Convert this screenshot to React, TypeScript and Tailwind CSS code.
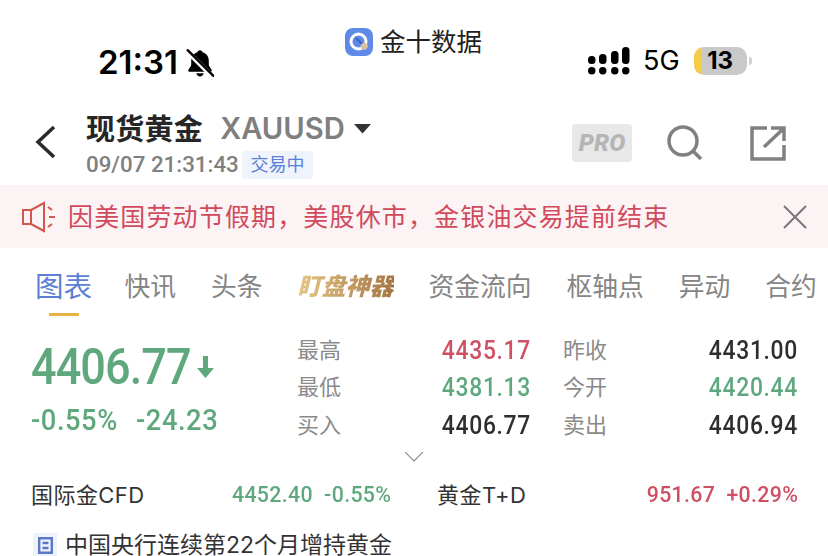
const cjk = "font-['Inter','Noto_Sans_CJK_SC',sans-serif]";

function Num({ children, className = "" }: { children: React.ReactNode; className?: string }) {
  return <span className={`font-['Roboto',sans-serif] font-medium inline-block whitespace-nowrap ${className}`}>{children}</span>;
}

function BellOff() {
  return (
    <svg width="28" height="30" viewBox="2 1 26 28" className="ml-[8px] mt-[1px]">
      <path d="M15 3c1.400 0 2.200.9 2.400 2 3.600 1 5.800 4 5.800 8v3.500c0 2 2.800 4.200 2.800 5.500 0 .8-.5 1.200-1.400 1.200H5.400C4.500 23.200 4 22.800 4 22c0-1.300 2.800-3.500 2.800-5.500V13c0-4 2.200-7 5.800-8 .2-1.100 1-2 2.400-2z" fill="#000" />
      <path d="M11.500 24.500h7c-.4 1.900-1.800 3-3.500 3s-3.100-1.100-3.500-3z" fill="#000" />
      <path d="M3 4l24 24" stroke="#fff" strokeWidth="4.500" />
      <path d="M3.500 3l24 24" stroke="#000" strokeWidth="2.200" strokeLinecap="round" />
    </svg>
  );
}

function Signal() {
  const cols = [
    { x: 0, top: 9 },
    { x: 11, top: 7 },
    { x: 23, top: 4 },
    { x: 34, top: 0 },
  ];
  return (
    <svg width="42" height="28" viewBox="0 0 42 28">
      {cols.map((c) => (
        <g key={c.x}>
          <rect x={c.x} y={c.top} width="7.500" height={17 - c.top} rx="3.500" fill="#000" />
          <rect x={c.x} y="20" width="7.500" height="7.500" rx="3.700" fill="#000" />
        </g>
      ))}
    </svg>
  );
}

function Logo() {
  return (
    <svg width="28" height="28" viewBox="0 0 28 28">
      <rect width="28" height="28" rx="8" fill="#5f8ae8" />
      <circle cx="13.500" cy="13.500" r="7.500" fill="none" stroke="#fff" strokeWidth="3" />
      <path d="M11 10l7 7" stroke="#3f66c4" strokeWidth="2" />
      <path d="M15.500 17l4-3 4 4-3 4-4-1z" fill="#d9c59a" />
    </svg>
  );
}

function Row({ l1, v1, c1, l2, v2, c2 }: { l1: string; v1: string; c1: string; l2: string; v2: string; c2: string }) {
  return (
    <div className="flex h-[37.5px] items-center">
      <span className="w-[88px] text-[22px] leading-none text-[#8a8a8a]">{l1}</span>
      <Num className={`w-[146px] origin-right scale-x-[0.88] text-right text-[26px] leading-none tracking-[0.03em] ${c1}`}>{v1}</Num>
      <span className="ml-[32px] w-[88px] text-[22px] leading-none text-[#8a8a8a]">{l2}</span>
      <Num className={`w-[147px] origin-right scale-x-[0.88] text-right text-[26px] leading-none tracking-[0.03em] ${c2}`}>{v2}</Num>
    </div>
  );
}

export default function App() {
  const tabs = ["快讯", "头条"];
  const tabs2 = ["资金流向", "枢轴点", "异动", "合约"];
  return (
    <div className={`w-[828px] h-[556px] overflow-hidden bg-white ${cjk}`}>
      {/* status bar */}
      <div className="flex h-[100px] items-start">
        <div className="flex w-[345px] items-center pl-[98px] pt-[45px]">
          <span className="font-['Inter',sans-serif] text-[33px] font-semibold leading-[34px] text-black">21:31</span>
          <BellOff />
        </div>
        <div className="flex w-[243px] items-center gap-[7px] pt-[28px]">
          <Logo />
          <span className="text-[25.500px] leading-[28px] text-[#222]">金十数据</span>
        </div>
        <div className="flex items-center pt-[46px]">
          <Signal />
          <span className="ml-[13px] font-['Inter',sans-serif] text-[27px] font-normal leading-[30px] text-black">5G</span>
          <div className="relative ml-[14px] flex h-[28px] w-[53px] items-center justify-center overflow-hidden rounded-[10px] bg-[#c9c9c9]">
            <div className="absolute left-0 top-0 h-full w-[7px] bg-[#f5cc45]" />
            <span className="relative font-['Inter',sans-serif] text-[24px] font-bold leading-none text-black">13</span>
          </div>
          <div className="ml-[2px] h-[8px] w-[3px] rounded-r-full bg-[#d0d0d0]" />
        </div>
      </div>

      {/* header */}
      <div className="flex h-[85px] items-center">
        <svg width="24" height="34" viewBox="0 0 24 34" className="ml-[34px] mt-[-2px]">
          <path d="M20 2L4 17l16 15" fill="none" stroke="#2a2a2a" strokeWidth="3.500" />
        </svg>
        <div className="ml-[28px] mt-[7px] flex w-[486px] flex-col">
          <div className="flex h-[32px] items-center">
            <span className="text-[29px] font-bold leading-none tracking-[0.01em] text-[#262626]">现货黄金</span>
            <span className="ml-[17px] font-['Inter',sans-serif] text-[29.200px] font-semibold leading-none text-[#7f7f7f]">XAUUSD</span>
            <svg width="17" height="10" viewBox="0 0 17 10" className="ml-[9px]"><path d="M0 0h17l-8.500 9.500z" fill="#333" /></svg>
          </div>
          <div className="mt-[5px] flex h-[29px] items-center">
            <Num className="w-[147px] text-[22.300px] leading-none text-[#808080]">09/07 21:31:43</Num>
            <span className="ml-[9px] flex h-[28px] w-[71px] items-center justify-center rounded-[4px] bg-[#eef3fc] text-[18px] leading-none text-[#5b7fd6]">交易中</span>
          </div>
        </div>
        <div className="flex h-[38px] w-[60px] items-center justify-center rounded-[4px] bg-[#e8e8e8]">
          <span className="font-['Roboto',sans-serif] text-[24px] font-black italic leading-none text-[#b5b5b5]">PRO</span>
        </div>
        <svg width="36" height="36" viewBox="0 0 36 36" className="ml-[35px]">
          <circle cx="16" cy="16" r="14" fill="none" stroke="#808080" strokeWidth="3.500" />
          <path d="M26 26l8 8" stroke="#808080" strokeWidth="3.500" />
        </svg>
        <svg width="36" height="36" viewBox="0 0 36 36" className="ml-[47px]">
          <path d="M17 3H2v31h32V20" fill="none" stroke="#808080" strokeWidth="3.500" />
          <path d="M14 22L32 5M21 3h13v13" fill="none" stroke="#808080" strokeWidth="3.500" />
        </svg>
      </div>

      {/* banner */}
      <div className="flex h-[63px] items-center bg-[#fcf3f4] pl-[22px]">
        <svg width="34" height="32" viewBox="0 0 34 32">
          <path d="M1 9h8v14H1zM9 9l13-7v28L9 23" fill="none" stroke="#d0584f" strokeWidth="2" />
          <path d="M26 6l4 3M27 16h6M26 26l4-3" fill="none" stroke="#d0584f" strokeWidth="2" />
        </svg>
        <span className="ml-[12px] mt-[2px] w-[715px] whitespace-nowrap text-[25px] leading-none tracking-[1.150px] text-[#d04a5e]">因美国劳动节假期，美股休市，金银油交易提前结束</span>
        <svg width="24" height="24" viewBox="0 0 24 24"><path d="M1 1l22 22M23 1L1 23" stroke="#777" strokeWidth="2" /></svg>
      </div>

      {/* tabs */}
      <div className="flex h-[77px] items-start gap-[35px] pl-[35px] pt-[23px]">
        <div className="mr-[-2.500px] flex w-[57px] flex-col items-center">
          <span className="text-[28.500px] leading-[32px] text-[#5c7fd8]">图表</span>
          <div className="mt-[10px] h-[3px] w-[30px] bg-[#e8b040]" />
        </div>
        {tabs.map((t) => (
          <span key={t} className="text-[25.750px] leading-[32px] text-[#858585]">{t}</span>
        ))}
        <span className="bg-linear-to-r from-[#e6c787] to-[#a47543] bg-clip-text text-[24px] font-black italic leading-[32px] text-transparent">盯盘神器</span>
        {tabs2.map((t) => (
          <span key={t} className="text-[25.750px] leading-[32px] text-[#858585]">{t}</span>
        ))}
      </div>

      {/* quote */}
      <div className="flex h-[127px] items-start pt-[6px]">
        <div className="w-[297px] pl-[31px]">
          <div className="mt-[8px] flex items-center">
            <Num className="origin-left scale-x-[0.9] text-[50px] leading-[56px] tracking-[-0.02em] text-[#5fa87e]">4406.77</Num>
            <svg width="20" height="24" viewBox="0 0 20 24" className="ml-[-12px]">
              <path d="M7 1h5v12h6L9.500 23 1 13h6z" fill="#5fa87e" />
            </svg>
          </div>
          <div className="mt-[8px] flex">
            <Num className="w-[105px] origin-left scale-x-[0.91] text-[30px] leading-[34px] tracking-[0.02em] text-[#5fa87e]">-0.55%</Num>
            <Num className="origin-left scale-x-[0.91] text-[30px] leading-[34px] tracking-[0.02em] text-[#5fa87e]">-24.23</Num>
          </div>
        </div>
        <div className="w-[501px]">
          <Row l1="最高" v1="4435.17" c1="text-[#cf4f63]" l2="昨收" v2="4431.00" c2="text-[#2e2e2e]" />
          <Row l1="最低" v1="4381.13" c1="text-[#5fa87e]" l2="今开" v2="4420.44" c2="text-[#5fa87e]" />
          <Row l1="买入" v1="4406.77" c1="text-[#2e2e2e]" l2="卖出" v2="4406.94" c2="text-[#2e2e2e]" />
        </div>
      </div>

      {/* toggle */}
      <div className="flex h-[15px] justify-center">
        <svg width="18" height="10" viewBox="0 0 18 10"><path d="M0 0l9 9 9-9" fill="none" stroke="#8c8c8c" strokeWidth="1.200" /></svg>
      </div>

      {/* refs */}
      <div className="flex h-[56px] items-center">
        <div className="flex w-[391px] items-center justify-between pl-[31px]">
          <span className="text-[22px] leading-none tracking-[0.02em] text-[#333]">国际金CFD</span>
          <Num className="origin-right scale-x-[0.97] text-[22px] leading-none tracking-[0.015em] text-[#5fa87e]">4452.40&nbsp;&nbsp;-0.55%</Num>
        </div>
        <div className="ml-[46px] flex w-[361px] items-center justify-between">
          <span className="text-[22px] leading-none tracking-[0.02em] text-[#333]">黄金T+D</span>
          <Num className="origin-right scale-x-[0.97] text-[22px] leading-none tracking-[0.015em] text-[#cf4f63]">951.67&nbsp;&nbsp;+0.29%</Num>
        </div>
      </div>

      {/* news */}
      <div className="flex items-center pl-[33px] pt-[9px]">
        <div className="flex h-[25px] w-[24px] items-center justify-center bg-[#eef2fb]">
          <svg width="15" height="17" viewBox="0 0 15 17"><path d="M1.200 1.200h12.600v14.600H1.200zM4.500 6h6M4.500 11h6" fill="none" stroke="#5b78c8" strokeWidth="2.400" /></svg>
        </div>
        <span className="ml-[8px] whitespace-nowrap text-[23px] leading-[26px] text-[#333]">中国央行连续第22个月增持黄金</span>
      </div>
    </div>
  );
}
